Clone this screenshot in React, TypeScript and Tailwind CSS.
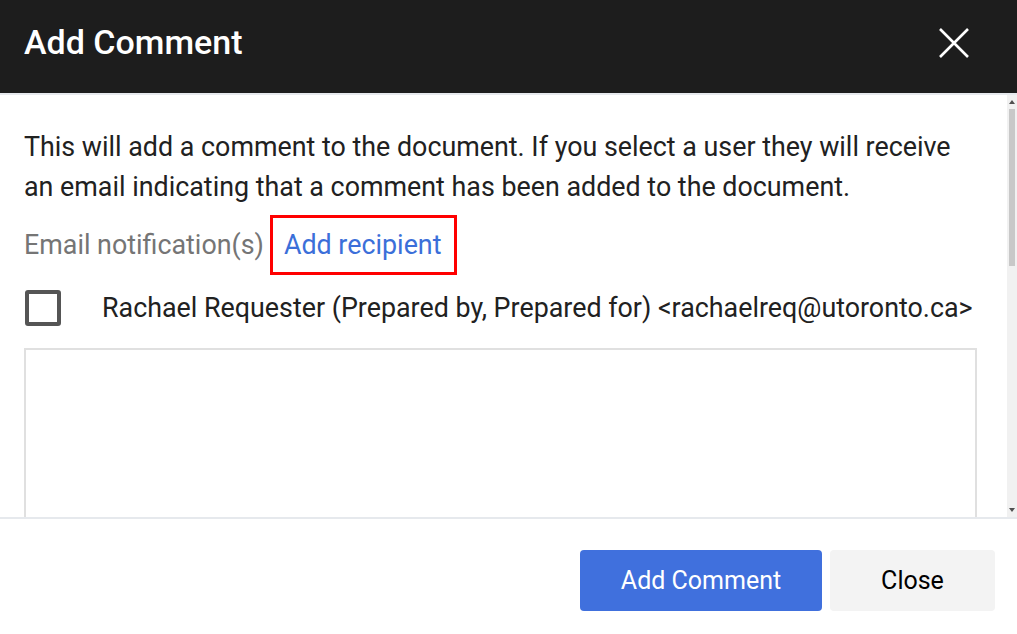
const font = { fontFamily: "Roboto, 'Noto Sans', sans-serif" };

function CloseIcon() {
  return (
    <svg width="32" height="32" viewBox="0 0 32 32" className="text-white">
      <path d="M2 2L30 30M30 2L2 30" stroke="currentColor" strokeWidth="2.6" strokeLinecap="butt" />
    </svg>
  );
}

function Scrollbar() {
  return (
    <div className="flex w-[10px] shrink-0 flex-col bg-[#f1f1f1]">
      <div className="flex h-[14px] items-center justify-center">
        <span className="block h-0 w-0 border-x-[3px] border-b-[4px] border-x-transparent border-b-[#505050]" />
      </div>
      <div className="mx-[2px] h-[157px] bg-[#c8c8c8]" />
      <div className="flex-1" />
      <div className="flex h-[14px] items-center justify-center">
        <span className="block h-0 w-0 border-x-[3px] border-t-[4px] border-x-transparent border-t-[#505050]" />
      </div>
    </div>
  );
}

export default function App() {
  return (
    <div className="flex h-[634px] w-[1017px] flex-col overflow-hidden bg-white" style={font}>
      <header className="flex h-[93px] shrink-0 items-center justify-between bg-[#1d1d1d] pb-[8px] pl-6 pr-[47px]">
        <h1 className="text-[34px] font-medium text-white">Add Comment</h1>
        <CloseIcon />
      </header>

      <div className="flex min-h-0 flex-1 border-y-2 border-[#e6e9ed]">
        <div className="min-w-0 flex-1 overflow-hidden pl-6 pr-[30px] pt-[32px]">
          <p className="text-[26.85px] leading-[40px] text-[#212121]">
            This will add a comment to the document. If you select a user they will receive
            an email indicating that a comment has been added to the document.
          </p>

          <div className="mt-2 flex items-center gap-[6px] text-[26.85px]">
            <span className="text-[#757575]">Email notification(s)</span>
            <span className="flex h-[60px] items-center border-[3px] border-[#ff0000] pl-[11px] pr-[13px] text-[#3b6fd9]">
              Add recipient
            </span>
          </div>

          <label className="mt-[13px] flex items-center gap-[41px] pl-px text-[26.85px] text-[#212121]">
            <span className="block h-[36px] w-[36px] shrink-0 rounded-[3px] border-[4px] border-[#555555]" />
            <span>Rachael Requester (Prepared by, Prepared for) &lt;rachaelreq@utoronto.ca&gt;</span>
          </label>

          <div className="mt-[20px] h-[200px] border-2 border-[#e0e0e0]" />
        </div>
        <Scrollbar />
      </div>

      <footer className="flex h-[115px] shrink-0 items-start justify-end gap-2 pr-[22px] pt-[31px]">
        <button className="h-[61px] w-[242px] rounded-[4px] bg-[#4070dd] text-[25px] text-white">
          Add Comment
        </button>
        <button className="h-[61px] w-[165px] rounded-[4px] bg-[#f3f3f3] text-[25px] text-black">
          Close
        </button>
      </footer>
    </div>
  );
}
